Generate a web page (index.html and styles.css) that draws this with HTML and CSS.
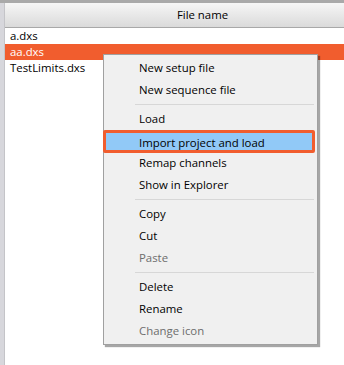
FILE: index.html
```html
<!DOCTYPE html>
<html lang="en">
<head>
    <meta charset="UTF-8">
    <title>Files</title>
    <link rel="stylesheet" href="styles.css">
</head>
<body>
    <div class="window">
        <div class="side"></div>
        <div class="grid">
            <div class="header">File name</div>
            <div class="row">a.dxs</div>
            <div class="row selected">aa.dxs</div>
            <div class="row">TestLimits.dxs</div>
        </div>
    </div>

    <div class="menu">
        <div class="item">New setup file</div>
        <div class="item">New sequence file</div>
        <div class="separator"></div>
        <div class="item">Load</div>
        <div class="item active">Import project and load</div>
        <div class="item">Remap channels</div>
        <div class="item">Show in Explorer</div>
        <div class="separator"></div>
        <div class="item">Copy</div>
        <div class="item">Cut</div>
        <div class="item disabled">Paste</div>
        <div class="separator"></div>
        <div class="item">Delete</div>
        <div class="item">Rename</div>
        <div class="item disabled">Change icon</div>
    </div>
</body>
</html>
```

FILE: styles.css
```css
* {
    margin: 0;
    padding: 0;
    box-sizing: border-box;
}

body {
    font-family: 'Open Sans', 'Liberation Sans', sans-serif;
    font-size: 11.4px;
    color: #000;
    background-color: #fff;
    width: 344px;
    height: 365px;
    position: relative;
    overflow: hidden;
}

.window {
    display: flex;
    height: 365px;
    border-top: 3px solid #a9a9a9;
}

.side {
    width: 5px;
    background-color: #d7d7dc;
    border-right: 1px solid #c4c4c8;
}

.grid {
    flex: 1;
}

.header {
    height: 25px;
    line-height: 24px;
    text-align: center;
    padding-left: 56px;
    background: linear-gradient(#f6f6f6, #dadada);
    border-bottom: 1px solid #a8a8a8;
}

.row {
    height: 16px;
    line-height: 16px;
    padding-left: 5px;
}

.row.selected {
    background-color: #f15d2e;
    color: #fff;
}

.menu {
    position: absolute;
    left: 103px;
    top: 54px;
    width: 215px;
    padding: 2px 2px 2px 1px;
    background-color: #f0f0f0;
    border: 1px solid #a0a0a0;
    box-shadow: 2px 2px 1px rgba(0, 0, 0, 0.35);
}

.item {
    height: 22px;
    line-height: 22px;
    padding-left: 34px;
    border-radius: 2px;
}

.item.active {
    margin: 0 0 0 -2px;
    height: 23px;
    line-height: 19px;
    background-color: #91c9f7;
    border: 3px solid #f15d2e;
    padding-left: 33px;
}

.item.active + .item {
    margin-top: -1px;
}

.item.disabled {
    color: #6d6d6d;
}

.separator {
    height: 1px;
    margin: 3px 1px 3px 30px;
    background-color: #d7d7d7;
}
```
